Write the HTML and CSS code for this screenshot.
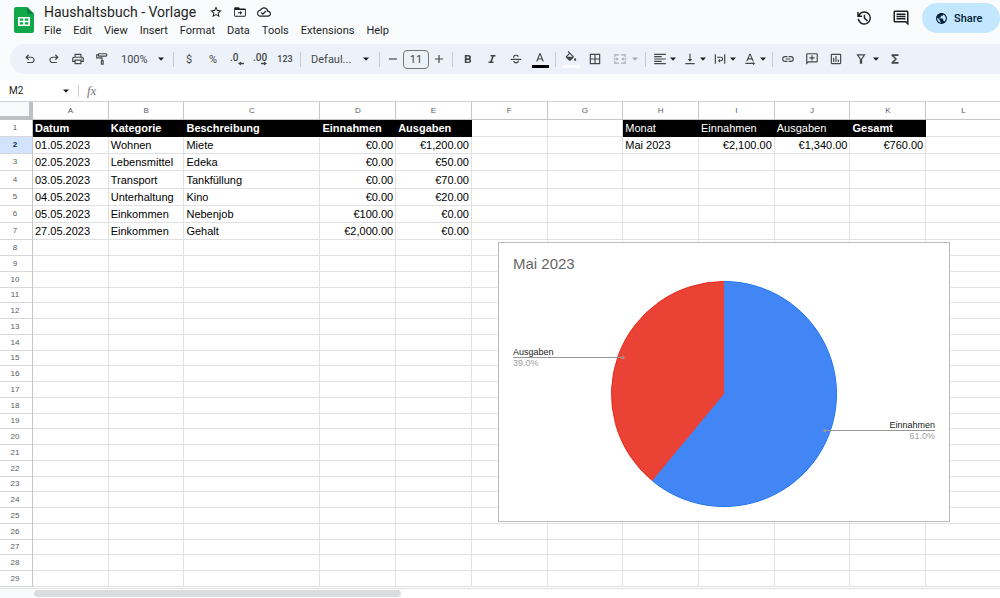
FILE: index.html
```html
<!DOCTYPE html>
<html lang="de">
<head>
<meta charset="utf-8">
<title>Haushaltsbuch - Vorlage</title>
<link rel="stylesheet" href="styles.css">
</head>
<body>
<svg class="defs" aria-hidden="true">
  <symbol id="caret" viewBox="0 0 8 8"><path d="M1 2.500h6L4 5.800z"/></symbol>
</svg>
<header class="top">
  <svg class="logo" viewBox="0 0 20 26" aria-hidden="true">
    <path fill="#12a84a" d="M2 0h11l7 7v17a2 2 0 0 1-2 2H2a2 2 0 0 1-2-2V2a2 2 0 0 1 2-2z"/>
    <path fill="#0b8038" d="M13 0l7 7h-5a2 2 0 0 1-2-2z"/>
    <path fill="#fff" fill-rule="evenodd" d="M4 10h12v9H4zM5.700 11.600v2.100h3.500v-2.100zM10.800 11.600v2.100h3.500v-2.100zM5.700 15.300v2.100h3.500v-2.100zM10.800 15.300v2.100h3.500v-2.100z"/>
  </svg>
  <div class="heading">
    <div class="title-row">
      <h1 class="title">Haushaltsbuch - Vorlage</h1>
      <button class="mini" aria-label="Star"><svg viewBox="0 0 24 24"><path d="M22 9.240l-7.190-.62L12 2 9.190 8.630 2 9.240l5.460 4.730L5.820 21 12 17.270 18.180 21l-1.630-7.030L22 9.240zM12 15.400l-3.760 2.270 1-4.280-3.320-2.880 4.380-.38L12 6.100l1.710 4.040 4.380.38-3.320 2.880 1 4.280L12 15.400z"/></svg></button>
      <button class="mini" aria-label="Move"><svg viewBox="0 0 24 24"><path d="M20 6h-8l-2-2H4c-1.100 0-2 .9-2 2v12c0 1.100.9 2 2 2h16c1.100 0 2-.9 2-2V8c0-1.100-.9-2-2-2zm0 12.500H3.500V8.500H20.500v10zM12.200 16.500l3.700-3.200-3.700-3.200v2.400H8.500v1.600h3.700z"/></svg></button>
      <button class="mini" aria-label="Document status"><svg viewBox="0 0 24 24"><path d="M19.350 10.040C18.670 6.590 15.640 4 12 4 9.110 4 6.610 5.640 5.360 8.040 2.340 8.360 0 10.910 0 14c0 3.310 2.690 6 6 6h13c2.760 0 5-2.240 5-5 0-2.640-2.050-4.780-4.650-4.960zM19 18H6c-2.210 0-4-1.790-4-4s1.790-4 4-4h.71C7.370 7.690 9.480 6 12 6c3.040 0 5.500 2.460 5.500 5.500v.5H19c1.660 0 3 1.340 3 3s-1.340 3-3 3zm-9-3.820l-2.090-2.090L6.500 13.500 10 17l6.010-6.010-1.410-1.410z"/></svg></button>
    </div>
    <nav class="menu">
      <button>File</button><button>Edit</button><button>View</button><button>Insert</button><button>Format</button><button>Data</button><button>Tools</button><button>Extensions</button><button>Help</button>
    </nav>
  </div>
  <div class="actions">
    <button class="action" aria-label="Version history"><svg viewBox="0 0 24 24"><path d="M12.500 3a9 9 0 0 0-7.500 4V4H3v6.500h6.500v-2H6.400A7 7 0 1 1 5.500 13H3.400A9 9 0 1 0 12.500 3zM11.600 7.500v5l4.300 4 1.300-1.400-3.700-3.400V7.500z"/></svg></button>
    <button class="action" aria-label="Comments"><svg viewBox="0 0 24 24"><path d="M22 4c0-1.100-.9-2-2-2H4c-1.100 0-2 .9-2 2v12c0 1.100.9 2 2 2h14l4 4V4zM20 17.200L18.800 16H4V4h16zM6 12h12v2H6zm0-3h12v2H6zm0-3h12v2H6z"/></svg></button>
    <button class="share"><svg viewBox="0 0 24 24" aria-hidden="true"><path d="M12 2C6.480 2 2 6.480 2 12s4.480 10 10 10 10-4.480 10-10S17.520 2 12 2zm-1 17.930c-3.950-.49-7-3.850-7-7.930 0-.62.08-1.210.21-1.790L9 15v1c0 1.100.9 2 2 2v1.930zm6.900-2.540c-.26-.81-1-1.390-1.900-1.390h-1v-3c0-.55-.45-1-1-1H8v-2h2c.55 0 1-.45 1-1V7h2c1.100 0 2-.9 2-2v-.41c2.930 1.190 5 4.060 5 7.410 0 2.080-.8 3.970-2.100 5.390z"/></svg>Share</button>
  </div>
</header>

<div class="toolbar" role="toolbar" aria-label="Main toolbar">
  <button class="tool" aria-label="Undo"><svg viewBox="0 0 24 24"><path d="M7 19v-2h7.100c1.600 0 3.900-1.200 3.900-3.500S15.700 10 14.100 10H7.800l2.600 2.600L9 14 4 9l5-5 1.400 1.400L7.800 8h6.300c3 0 5.900 2.200 5.900 5.500S17.100 19 14.100 19z"/></svg></button>
  <button class="tool" aria-label="Redo"><svg viewBox="0 0 24 24"><path d="M17 19v-2H9.900C8.300 17 6 15.800 6 13.500S8.300 10 9.900 10h6.300l-2.600 2.600L15 14l5-5-5-5-1.400 1.400L16.200 8H9.900C6.900 8 4 10.200 4 13.500S6.900 19 9.900 19z"/></svg></button>
  <button class="tool" aria-label="Print"><svg viewBox="0 0 24 24"><path d="M19 8h-1V3H6v5H5c-1.660 0-3 1.340-3 3v6h4v4h12v-4h4v-6c0-1.660-1.340-3-3-3zM8 5h8v3H8zm8 14H8v-4h8zm4-4h-2v-2H6v2H4v-4c0-.55.45-1 1-1h14c.55 0 1 .45 1 1z"/><circle cx="18" cy="11.500" r="1"/></svg></button>
  <button class="tool" aria-label="Paint format"><svg viewBox="0 0 24 24"><path d="M19 2H7c-1.100 0-2 .9-2 2H2v7h9v3h-1v8h5v-8h-2V9H4V6h1c0 1.100.9 2 2 2h12c1.100 0 2-.9 2-2V4c0-1.100-.9-2-2-2zm0 4H7V4h12zM13 20h-1v-4h1z"/></svg></button>
  <div class="picker zoom">
    <select aria-label="Zoom"><option>100%</option></select>
    <svg class="caret"><use href="#caret"/></svg>
  </div>
  <i class="rule"></i>
  <button class="tool">$</button>
  <button class="tool">%</button>
  <button class="tool decimal" aria-label="Decrease decimal places"><svg viewBox="0 0 16 16"><text x="1" y="10">.0</text><path d="M9 12.500l3-2v1.300h3v1.400h-3v1.300z"/></svg></button>
  <button class="tool decimal" aria-label="Increase decimal places"><svg viewBox="0 0 16 16"><text x="0" y="10">.00</text><path d="M14 12.500l-3-2v1.300H8v1.400h3v1.300z"/></svg></button>
  <button class="tool digits">123</button>
  <i class="rule"></i>
  <div class="picker font">
    <select aria-label="Font"><option>Defaul...</option></select>
    <svg class="caret"><use href="#caret"/></svg>
  </div>
  <i class="rule"></i>
  <button class="tool step" aria-label="Decrease font size"><svg viewBox="0 0 24 24"><path d="M5 11h14v2H5z"/></svg></button>
  <input class="size" aria-label="Font size" value="11">
  <button class="tool step" aria-label="Increase font size"><svg viewBox="0 0 24 24"><path d="M5 11h6V5h2v6h6v2h-6v6h-2v-6H5z"/></svg></button>
  <i class="rule"></i>
  <button class="tool" aria-label="Bold"><svg viewBox="0 0 24 24"><path d="M15.600 11.800c1-.7 1.600-1.800 1.600-2.800 0-2.300-1.700-4-4-4H6.500v14h7.300c2.100 0 3.700-1.700 3.700-3.800 0-1.500-.9-2.800-1.900-3.400zM9.500 7.500h3a1.500 1.500 0 0 1 0 3h-3zm3.500 9H9.500v-3H13a1.500 1.500 0 0 1 0 3z"/></svg></button>
  <button class="tool" aria-label="Italic"><svg viewBox="0 0 24 24"><path d="M9.500 5v2.600h2.600L8.900 16.400H6V19h8.500v-2.600h-2.600l3.200-8.800H18V5z"/></svg></button>
  <button class="tool" aria-label="Strikethrough"><svg viewBox="0 0 24 24"><path d="M3 11.500h18v2H3zM7.200 10C6 6.500 8.800 4.500 12 4.500c2.500 0 4.300 1.100 5 3.200l-2 .8c-.5-1.300-1.500-2-3-2-2.300 0-3.300 1.400-2.700 3.500zM7 15.500l2-.7c.4 1.600 1.500 2.500 3.200 2.500 1.800 0 2.900-.9 2.700-2.800H17c.2 3.100-1.900 5-4.900 5-2.600 0-4.500-1.500-5.100-4z"/></svg></button>
  <button class="tool ink" aria-label="Text color"><svg viewBox="0 0 24 24"><path d="M10.900 4L5.500 18h2.200l1.200-3.300h6.200l1.200 3.300h2.200L13.100 4zM9.600 12.800L12 6.400l2.400 6.400z"/></svg></button>
  <i class="rule"></i>
  <button class="tool ink fill" aria-label="Fill color"><svg viewBox="0 0 24 24"><path d="M16.600 8.900L7.600 0 6.200 1.400l2.400 2.400-5.200 5.100c-.6.600-.6 1.500 0 2.100l5.500 5.500c.3.300.7.400 1.100.4s.8-.1 1.100-.4l5.500-5.500c.6-.5.600-1.500 0-2.100zM5.200 10L10 5.200l4.800 4.800zM19 11.500s-2 2.200-2 3.500a2 2 0 0 0 4 0c0-1.300-2-3.500-2-3.500z"/></svg></button>
  <button class="tool" aria-label="Borders"><svg viewBox="0 0 24 24"><path d="M3 3v18h18V3zm8 16H5v-6h6zm0-8H5V5h6zm8 8h-6v-6h6zm0-8h-6V5h6z"/></svg></button>
  <button class="split wide" aria-label="Merge cells" disabled><svg viewBox="0 0 24 24"><path d="M2 4h8v2H4v3H2zM14 4h8v5h-2V6h-6zM2 15h2v3h6v2H2zM20 15h2v5h-8v-2h6zM1 11h5V9l4 3-4 3v-2H1zM23 11h-5V9l-4 3 4 3v-2h5z"/></svg><svg class="caret"><use href="#caret"/></svg></button>
  <i class="rule"></i>
  <button class="split" aria-label="Horizontal align"><svg viewBox="0 0 24 24"><path d="M2 3h20v2H2zM2 7h13v2H2zM2 11h20v2H2zM2 15h13v2H2zM2 19h20v2H2z"/></svg><svg class="caret"><use href="#caret"/></svg></button>
  <button class="split" aria-label="Vertical align"><svg viewBox="0 0 24 24"><path d="M16 12h-3V3h-2v9H8l4 4.500zM4 19v2h16v-2z"/></svg><svg class="caret"><use href="#caret"/></svg></button>
  <button class="split" aria-label="Text wrapping"><svg viewBox="0 0 24 24"><path d="M3 4h2v16H3zM19 4h2v16h-2zM7 8h6.500a4 4 0 0 1 0 8H12v2.500L8.500 15l3.500-3.500V14h1.500a2 2 0 0 0 0-4H7z"/></svg><svg class="caret"><use href="#caret"/></svg></button>
  <button class="split" aria-label="Text rotation"><svg viewBox="0 0 24 24"><path d="M11 3L5.500 16h2l1.300-3.200h6.400l1.300 3.200h2L13 3zM9.600 10.900L12 5l2.400 5.900zM4 18.500h13V16.500l4 3-4 3v-2H4z"/></svg><svg class="caret"><use href="#caret"/></svg></button>
  <i class="rule"></i>
  <button class="tool" aria-label="Insert link"><svg viewBox="0 0 24 24"><path d="M3.900 12c0-1.710 1.390-3.100 3.100-3.100h4V7H7a5 5 0 0 0 0 10h4v-1.900H7c-1.710 0-3.100-1.390-3.100-3.100zM8 13h8v-2H8zm9-6h-4v1.900h4a3.100 3.100 0 0 1 0 6.200h-4V17h4a5 5 0 0 0 0-10z"/></svg></button>
  <button class="tool" aria-label="Insert comment"><svg viewBox="0 0 24 24"><path d="M20 2H4c-1.100 0-2 .9-2 2v18l4-4h14c1.100 0 2-.9 2-2V4c0-1.100-.9-2-2-2zm0 14H5.200L4 17.200V4h16zM11 14.500h2V11h3.500V9H13V5.500h-2V9H7.500v2H11z"/></svg></button>
  <button class="tool" aria-label="Insert chart"><svg viewBox="0 0 24 24"><path d="M19 3H5c-1.100 0-2 .9-2 2v14c0 1.100.9 2 2 2h14c1.100 0 2-.9 2-2V5c0-1.100-.9-2-2-2zm0 16H5V5h14zM7 10h2v7H7zm4-3h2v10h-2zm4 6h2v4h-2z"/></svg></button>
  <button class="split wide" aria-label="Create a filter"><svg viewBox="0 0 24 24"><path d="M4 4h16l-6 8.500V20h-4v-7.500zM7.900 6l4.100 5.800L16.100 6z"/></svg><svg class="caret"><use href="#caret"/></svg></button>
  <button class="tool" aria-label="Functions"><svg viewBox="0 0 24 24"><path d="M18 4H6v2.500l6.200 5.500L6 17.500V20h12v-3h-7.500l5-5-5-5H18z"/></svg></button>
</div>

<div class="formula">
  <input class="cell-name" aria-label="Name box" value="M2">
  <svg class="caret"><use href="#caret"/></svg>
  <i class="rule"></i>
  <label class="fx" for="fx">fx</label>
  <input class="fx-input" id="fx">
</div>

<main class="sheet">
  <table class="grid">
    <colgroup><col class="col-num"><col><col><col class="col-text"><col><col><col><col><col><col><col><col><col></colgroup>
    <thead><tr id="letters"><td class="corner"></td></tr></thead>
    <tbody id="ledger"></tbody>
    <tbody id="blank"></tbody>
  </table>
  <figure class="chart">
    <svg viewBox="0 0 450 278" role="img" aria-label="Mai 2023">
      <text class="chart-title" x="14" y="26">Mai 2023</text>
      <path fill="#4285f4" stroke="#1a73f0" d="M225 38.500a112.500 112.500 0 1 1-71.700 199.200" />
      <path fill="#4285f4" d="M225 39a112 112 0 1 1-71.400 198.300L225 151z"/>
      <path fill="#ea4335" d="M225 151L153.300 237.700A112.500 112.500 0 0 1 225 38.500z"/>
      <path fill="none" stroke="#e6291c" d="M153.300 237.700A112.500 112.500 0 0 1 225 38.500"/>
      <path fill="none" stroke="#999" d="M14 114.500H124M326 187.500H436"/>
      <circle cx="124" cy="114.500" r="1.500" fill="#999"/>
      <circle cx="326" cy="187.500" r="1.500" fill="#999"/>
      <text class="name" x="14" y="112">Ausgaben</text>
      <text class="share-value" x="14" y="123">39.0%</text>
      <text class="name end" x="436" y="185">Einnahmen</text>
      <text class="share-value end" x="436" y="196">61.0%</text>
    </svg>
  </figure>
</main>
<footer class="scroll"><div class="track"><div class="thumb"></div></div></footer>
<script src="sheet.js"></script>
</body>
</html>
```
FILE: styles.css
```css
* { box-sizing: border-box; }
body {
  margin: 0;
  height: 100vh;
  display: flex;
  flex-direction: column;
  overflow: hidden;
  background: #f9fbfd;
  color: #1f1f1f;
  font-family: Roboto, "Liberation Sans", sans-serif;
  font-size: 11px;
}
button, input, select {
  font: inherit;
  color: inherit;
  background: none;
  border: 0;
  padding: 0;
  margin: 0;
  outline: 0;
}
svg { display: block; fill: currentColor; }
.defs { display: none; }

.top { display: flex; height: 44px; flex: none; }
.logo { width: 20px; height: 26px; margin: 7px 10px 0 14px; }
.heading { padding-top: 2px; }
.title-row { display: flex; align-items: center; height: 20px; gap: 10px; }
.title { margin: 0 3px 0 0; font-size: 14px; line-height: 20px; font-weight: 400; }
.mini svg { width: 14px; height: 14px; }
.menu { display: flex; gap: 12px; padding-top: 1px; }
.menu button { line-height: 16px; }
.actions { display: flex; align-items: center; height: 36px; margin-left: auto; gap: 19px; }
.action svg { width: 18px; height: 18px; }
.share {
  display: flex;
  align-items: center;
  gap: 6px;
  height: 30px;
  width: 78px;
  margin-left: -7px;
  padding-left: 13px;
  border-radius: 15px;
  background: #c2e7ff;
  color: #001d35;
  font-weight: 500;
}
.share svg { width: 13px; height: 13px; }

.toolbar {
  display: flex;
  align-items: center;
  flex: none;
  height: 30px;
  margin: 0 0 6px 10px;
  padding-left: 8px;
  border-radius: 15px 0 0 15px;
  background: #edf2fa;
  color: #444746;
}
.tool { display: grid; place-items: center; width: 24px; height: 24px; }
.tool svg, .split svg { width: 14px; height: 14px; }
.step { width: 20px; }
.decimal svg { width: 16px; height: 16px; overflow: visible; font-size: 10px; font-weight: 500; }
.digits { font-size: 9px; font-weight: 500; }
.rule { flex: none; width: 1px; height: 15px; margin: 0 3px; background: #c7cbd1; }
.toolbar .caret, .formula .caret { flex: none; width: 8px; height: 8px; color: #1f1f1f; }
.picker { display: flex; align-items: center; justify-content: space-between; padding: 0 5px 0 7px; }
.picker select { appearance: none; }
.zoom { width: 56px; }
.font { width: 72px; padding-right: 6px; }
.size {
  width: 26px;
  height: 19px;
  border: 1px solid #747775;
  border-radius: 4px;
  text-align: center;
}
.ink { align-content: center; gap: 0; }
.ink::after { content: ""; width: 17px; height: 3px; background: #000; }
.fill::after { background: #fff; }
.split { display: flex; align-items: center; gap: 2px; width: 30px; height: 24px; padding-left: 4px; }
.wide { width: 35px; padding-left: 6px; gap: 4px; }
.split:disabled, .split:disabled .caret { color: #a8abb0; }

.formula {
  display: flex;
  align-items: center;
  flex: none;
  height: 22px;
  padding-left: 9px;
  background: #fff;
  border-bottom: 1px solid #d0d3d5;
}
.cell-name { width: 53px; font-size: 10px; }
.formula .rule { height: 12px; margin: 0 8px; }
.fx { font: italic 13px "Liberation Serif", serif; color: #777; }
.fx-input { flex: 1; margin-left: 8px; }

.sheet {
  position: relative;
  flex: 1;
  min-height: 0;
  overflow: hidden;
  background: #fff;
  font-family: "Liberation Sans", Arial, sans-serif;
}
/* The last column runs on past the right edge of the window. */
.grid { width: calc(100% + 2px); table-layout: fixed; border-collapse: separate; border-spacing: 0; }
.col-num { width: 33px; }
.col-text { width: 136px; }
.grid th, .grid td {
  padding: 0 2px;
  border-right: 1px solid #e1e1e1;
  border-bottom: 1px solid #e1e1e1;
  line-height: 14px;
  white-space: nowrap;
  overflow: hidden;
  text-align: left;
}
.grid thead th, .grid tbody th {
  padding: 0;
  border-color: #c4c7c5;
  font-size: 8px;
  font-weight: 400;
  text-align: center;
  color: #575b5f;
}
.grid tbody th { padding-right: 2px; border-bottom-color: #d5d7d8; }
.grid thead tr { height: 18px; }
.grid thead .corner { background: #f8f9fa; border-right: 4px solid #bdc1c6; border-bottom: 4px solid #bdc1c6; }
#ledger tr { height: 17px; }
#ledger tr:nth-child(4) { height: 18px; }
#ledger td { font-size: 11px; color: #000; }
#blank tr { height: 16px; }
#blank tr:nth-child(4n) { height: 15px; }
#blank th { line-height: 12px; }
#ledger .money { text-align: right; }
#ledger .head { background: #000; border-color: #000; color: #fff; }
#ledger .strong { font-weight: 700; }
.grid tbody .active { background: #d3e3fd; color: #041e49; font-weight: 700; }

.chart {
  position: absolute;
  left: 498px;
  top: 140px;
  width: 452px;
  margin: 0;
  background: #fff;
  border: 1px solid #bdbdbd;
}
.chart svg { width: 100%; }
.chart-title { font-size: 15px; fill: #666; }
.name, .share-value { font-size: 9px; fill: #222; }
.share-value { fill: #9e9e9e; }
.end { text-anchor: end; }

.scroll { flex: none; height: 10px; padding-left: 33px; background: #f8f9fa; border-top: 1px solid #e1e1e1; }
.track { height: 100%; padding: 1px; background: #fff; }
.thumb { width: 38%; height: 7px; border-radius: 4px; background: #dadce0; }
```
FILE: sheet.js
```js
const letters = "ABCDEFGHIJKL".split("");
const lastRow = 29;

const rows = [
  ["Datum", "Kategorie", "Beschreibung", "Einnahmen", "Ausgaben", "", "", "Monat", "Einnahmen", "Ausgaben", "Gesamt", ""],
  ["01.05.2023", "Wohnen", "Miete", "€0.00", "€1,200.00", "", "", "Mai 2023", "€2,100.00", "€1,340.00", "€760.00", ""],
  ["02.05.2023", "Lebensmittel", "Edeka", "€0.00", "€50.00"],
  ["03.05.2023", "Transport", "Tankfüllung", "€0.00", "€70.00"],
  ["04.05.2023", "Unterhaltung", "Kino", "€0.00", "€20.00"],
  ["05.05.2023", "Einkommen", "Nebenjob", "€100.00", "€0.00"],
  ["27.05.2023", "Einkommen", "Gehalt", "€2,000.00", "€0.00"]
];

function addCell(row, tag, text, classes) {
  const cell = document.createElement(tag);
  cell.textContent = text;
  if (classes) cell.className = classes;
  row.append(cell);
}

const header = document.getElementById("letters");
letters.forEach(letter => addCell(header, "th", letter));

for (let n = 1; n <= lastRow; n++) {
  const values = rows[n - 1] || [];
  const row = document.createElement("tr");
  addCell(row, "th", n, n === 2 ? "active" : "");
  letters.forEach((letter, i) => {
    const text = values[i] || "";
    let classes = "";
    if (n === 1 && text) classes = i < 5 || letter === "K" ? "head strong" : "head";
    else if (text.startsWith("€")) classes = "money";
    addCell(row, "td", text, classes);
  });
  document.getElementById(n <= rows.length ? "ledger" : "blank").append(row);
}
```
